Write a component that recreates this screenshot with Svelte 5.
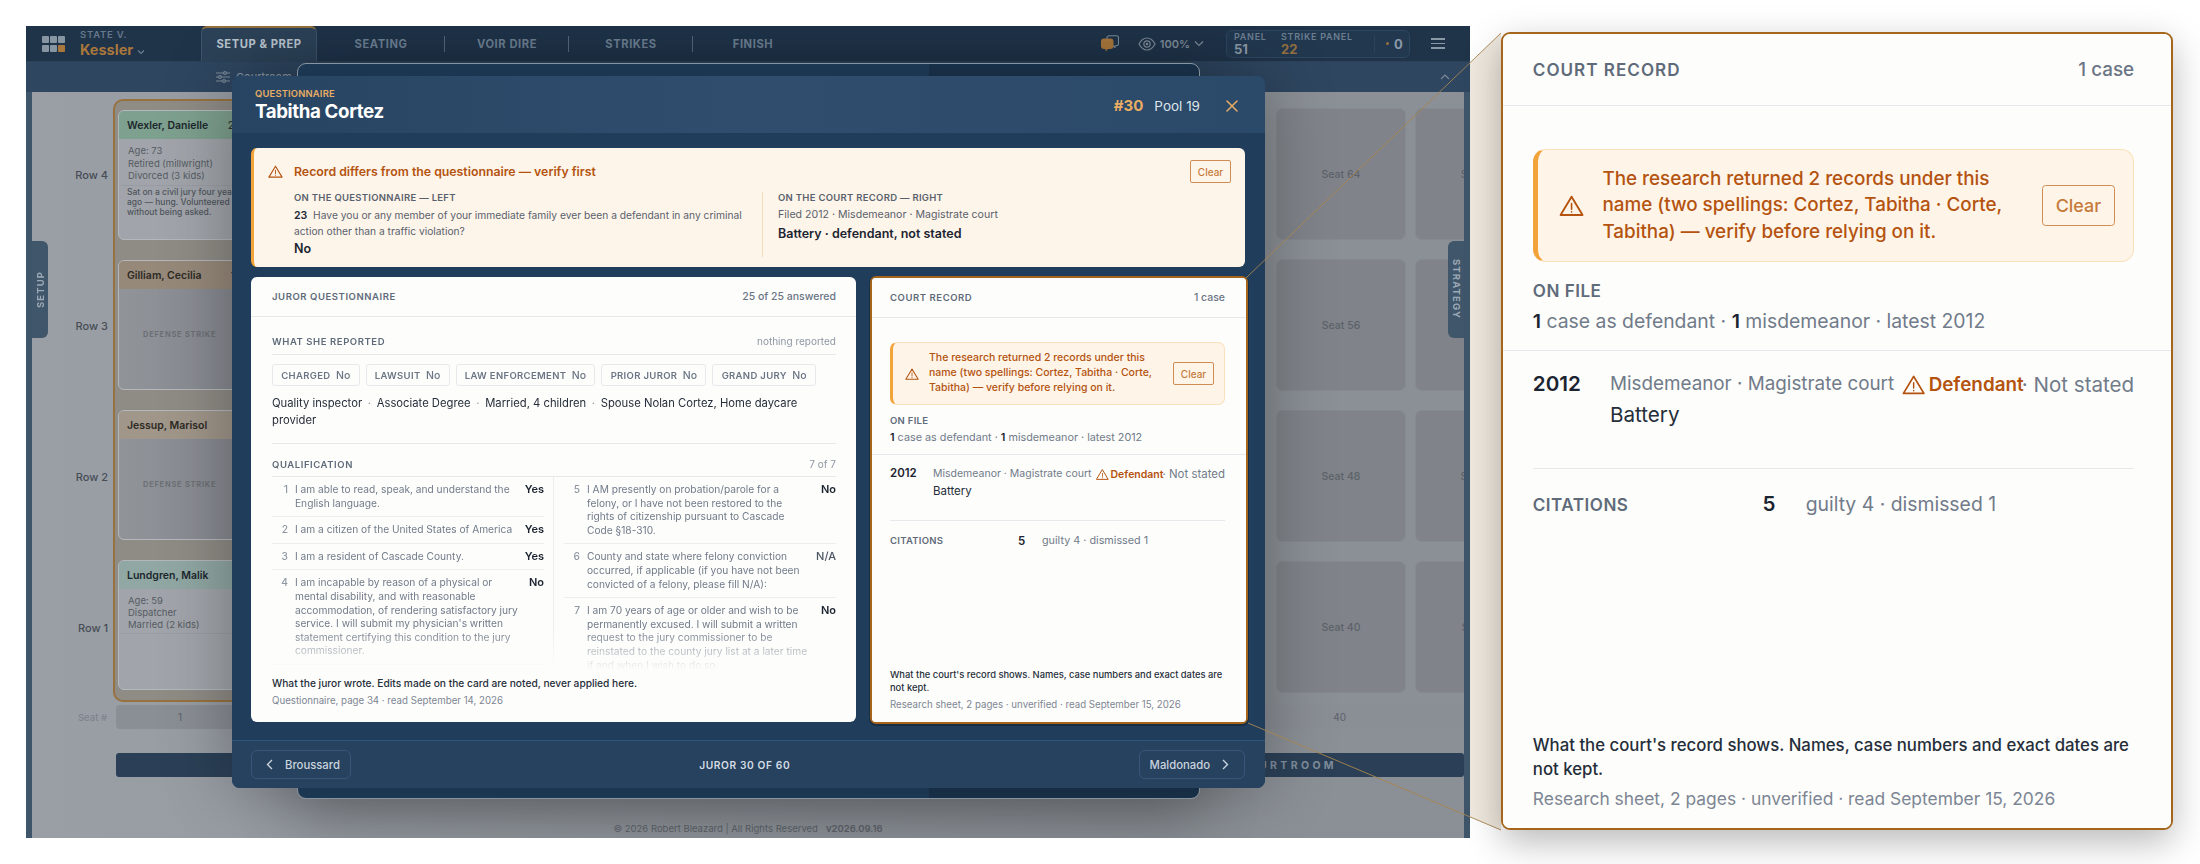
<script>
  const tabs = ['SEATING', 'VOIR DIRE', 'STRIKES', 'FINISH']

  const chips = [
    ['CHARGED', 'No'],
    ['LAWSUIT', 'No'],
    ['LAW ENFORCEMENT', 'No'],
    ['PRIOR JUROR', 'No'],
    ['GRAND JURY', 'No']
  ]

  const qualLeft = [
    { n: 1, text: 'I am able to read, speak, and understand the English language.', ans: 'Yes' },
    { n: 2, text: 'I am a citizen of the United States of America', ans: 'Yes' },
    { n: 3, text: 'I am a resident of Cascade County.', ans: 'Yes' },
    { n: 4, text: "I am incapable by reason of a physical or mental disability, and with reasonable accommodation, of rendering satisfactory jury service. I will submit my physician's written statement certifying this condition to the jury commissioner.", ans: 'No' }
  ]

  const qualRight = [
    { n: 5, text: 'I AM presently on probation/parole for a felony, or I have not been restored to the rights of citizenship pursuant to Cascade Code §18-310.', ans: 'No' },
    { n: 6, text: 'County and state where felony conviction occurred, if applicable (if you have not been convicted of a felony, please fill N/A):', ans: 'N/A', plain: true },
    { n: 7, text: 'I am 70 years of age or older and wish to be permanently excused. I will submit a written request to the jury commissioner to be reinstated to the county jury list at a later time if and when I wish to do so.', ans: 'No' }
  ]

  const rowLabels = ['Row 4', 'Row 3', 'Row 2', 'Row 1']
  const seatCols = [[64, 56, 48, 40], [65, 57, 49, 41]]
</script>

{#snippet warn(size)}
  <svg class="warn" width={size} height={size} viewBox="0 0 24 24" fill="none" stroke="currentColor" stroke-width="1.8" stroke-linejoin="round" stroke-linecap="round">
    <path d="M12 3.5 22.5 21h-21z" />
    <path d="M12 10v5.5M12 18v.2" stroke-width="1.5" />
  </svg>
{/snippet}

{#snippet courtRecord()}
  <div class="record">
    <div class="card-head rec-pad">
      <span class="card-title">COURT RECORD</span>
      <span class="card-count">1 case</span>
    </div>
    <div class="rec-alert">
      <span class="rec-alert-icon">{@render warn(14)}</span>
      <p>The research returned 2 records under this name (two spellings: Cortez, Tabitha · Corte, Tabitha) — verify before relying on it.</p>
      <button class="clear">Clear</button>
    </div>
    <div class="rec-pad onfile">
      <div class="rec-label">ON FILE</div>
      <div class="rec-summary"><b>1</b> case as defendant · <b>1</b> misdemeanor · latest 2012</div>
    </div>
    <div class="case">
      <div class="case-line">
        <b class="case-year">2012</b>
        <span class="case-kind">Misdemeanor · Magistrate court</span>
        <span class="case-role">{@render warn(13)}<b>Defendant</b><span class="role-note">· Not stated</span></span>
      </div>
      <div class="case-charge">Battery</div>
    </div>
    <div class="citations">
      <span class="rec-label">CITATIONS</span>
      <b>5</b>
      <span class="cit-note">guilty 4 · dismissed 1</span>
    </div>
    <div class="rec-foot rec-pad">
      <p class="foot-main">What the court's record shows. Names, case numbers and exact dates are not kept.</p>
      <p class="foot-note">Research sheet, 2 pages · unverified · read September 15, 2026</p>
    </div>
  </div>
{/snippet}

<div class="page">
  <div class="app">
    <header class="topbar">
      <div class="brand">
        <div class="grid-icon">
          <i></i><i></i><i></i><i></i><i></i><i class="on"></i>
        </div>
        <div class="case-name">
          <span class="state">STATE V.</span>
          <span class="kessler">Kessler
            <svg width="8" height="6" viewBox="0 0 8 6" fill="none" stroke="#6f8092" stroke-width="1.1"><path d="M1 1.5 4 4.5 7 1.5" /></svg>
          </span>
        </div>
      </div>
      <nav class="tabs">
        <span class="tab active">SETUP &amp; PREP</span>
        {#each tabs as t, i}
          <span class="tab" class:first={i === 0} class:last={i === tabs.length - 1}>{t}</span>
        {/each}
      </nav>
      <div class="top-right">
        <svg class="bubbles" width="18" height="17" viewBox="0 0 18 17">
          <path d="M8 .7h7.500a2 2 0 0 1 2 2v6a2 2 0 0 1-2 2H14v1.800L12 10.700" fill="none" stroke="#7e8c9a" stroke-width="1.100" stroke-linejoin="round" />
          <path d="M8 .7a2 2 0 0 0-2 2v2" fill="none" stroke="#7e8c9a" stroke-width="1.100" />
          <path d="M3 3.500h6.500a3 3 0 0 1 3 3v4.500a3 3 0 0 1-3 3H7L4.500 16.500V14H3a3 3 0 0 1-3-3V6.500a3 3 0 0 1 3-3z" fill="#a9773c" />
        </svg>
        <div class="zoom-ctl">
          <svg width="18" height="14" viewBox="0 0 18 14" fill="none" stroke="#7e8c9a" stroke-width="1.200">
            <path d="M1 7c2-3.800 5-6 8-6s6 2.200 8 6c-2 3.800-5 6-8 6s-6-2.200-8-6z" />
            <circle cx="9" cy="7" r="3.200" />
            <circle cx="9" cy="7" r="1.300" fill="#7e8c9a" stroke="none" />
          </svg>
          <span>100%</span>
          <svg width="10" height="7" viewBox="0 0 10 7" fill="none" stroke="#7e8c9a" stroke-width="1.100"><path d="M1 1.500 5 5.500 9 1.500" /></svg>
        </div>
        <div class="counts">
          <div class="count panel"><span>PANEL</span><b>51</b></div>
          <div class="count strike"><span>STRIKE PANEL</span><b>22</b></div>
          <div class="alt"><i></i><b>0</b></div>
        </div>
        <div class="burger"><i></i><i></i><i></i></div>
      </div>
    </header>

    <div class="subbar">
      <svg class="sliders" width="14" height="12" viewBox="0 0 14 12" fill="none" stroke="#7e8c9a" stroke-width="1.100">
        <path d="M0 2h14M0 6h14M0 10h14" />
        <circle cx="9" cy="2" r="1.400" fill="#2d4560" />
        <circle cx="4" cy="6" r="1.400" fill="#2d4560" />
        <circle cx="8" cy="10" r="1.400" fill="#2d4560" />
      </svg>
      <span class="sub-label">Courtroom</span>
      <svg class="sub-up" width="10" height="6" viewBox="0 0 10 6" fill="none" stroke="#7e8c9a" stroke-width="1.100"><path d="M1 5 5 1 9 5" /></svg>
    </div>

    <main class="board">
      <div class="rows">
        <div class="row-labels">
          {#each rowLabels as r}<div class="row-label">{r}</div>{/each}
        </div>
        <div class="pick-col">
          <div class="juror">
            <div class="juror-head green"><span>Wexler, Danielle</span><span class="juror-num">24</span></div>
            <div class="juror-facts">Age: 73<br />Retired (millwright)<br />Divorced (3 kids)</div>
            <div class="juror-note">Sat on a civil jury four years ago — hung. Volunteered it without being asked.</div>
          </div>
          <div class="juror struck">
            <div class="juror-head tan"><span>Gilliam, Cecilia</span><span class="juror-num">17</span></div>
            <div class="strike-mark">DEFENSE STRIKE</div>
          </div>
          <div class="juror struck">
            <div class="juror-head tan2"><span>Jessup, Marisol</span></div>
            <div class="strike-mark">DEFENSE STRIKE</div>
          </div>
          <div class="juror">
            <div class="juror-head teal"><span>Lundgren, Malik</span></div>
            <div class="juror-facts small">Age: 59<br />Dispatcher<br />Married (2 kids)</div>
          </div>
        </div>
        <div class="spacer"></div>
        {#each seatCols as col}
          <div class="seat-col">
            {#each col as s}<div class="seat">Seat {s}</div>{/each}
          </div>
        {/each}
      </div>
      <div class="seatno-row">
        <span class="seatno-label">Seat #</span>
        <div class="seatno-bar"><span class="n1">1</span><span class="n40">40</span></div>
      </div>
      <div class="court-bar">COURTROOM</div>
      <footer class="copyright">© 2026 Robert Bleazard | All Rights Reserved &nbsp; <b>v2026.09.16</b></footer>
    </main>

    <div class="side-tab setup">SETUP</div>
    <div class="side-tab strategy">STRATEGY</div>

    <div class="back-sheet"></div>

    <section class="modal">
      <div class="modal-head">
        <div>
          <div class="eyebrow">QUESTIONNAIRE</div>
          <h1>Tabitha Cortez</h1>
        </div>
        <div class="head-right">
          <b>#30</b>
          <span>Pool 19</span>
          <svg width="12" height="12" viewBox="0 0 12 12" fill="none" stroke="#e8ad63" stroke-width="1.500" stroke-linecap="round"><path d="M1 1l10 10M11 1 1 11" /></svg>
        </div>
      </div>

      <div class="modal-body">
        <div class="banner">
          <div class="banner-top">
            <span class="banner-icon">{@render warn(15)}</span>
            <strong>Record differs from the questionnaire — verify first</strong>
            <button class="clear">Clear</button>
          </div>
          <div class="banner-cols">
            <div class="banner-left">
              <div class="b-label">ON THE QUESTIONNAIRE — LEFT</div>
              <p class="b-text q"><b>23</b>&nbsp; Have you or any member of your immediate family ever been a defendant in any criminal action other than a traffic violation?</p>
              <div class="b-answer">No</div>
            </div>
            <div class="banner-right">
              <div class="b-label">ON THE COURT RECORD — RIGHT</div>
              <p class="b-text">Filed 2012 · Misdemeanor · Magistrate court</p>
              <div class="b-answer r">Battery · defendant, not stated</div>
            </div>
          </div>
        </div>

        <div class="cards">
          <article class="q-card">
            <div class="card-head q-pad">
              <span class="card-title">JUROR QUESTIONNAIRE</span>
              <span class="card-count">25 of 25 answered</span>
            </div>
            <div class="q-body q-pad">
              <div class="sec-head">
                <span class="sec-title">WHAT SHE REPORTED</span>
                <span class="sec-note">nothing reported</span>
              </div>
              <div class="chips">
                {#each chips as c}
                  <span class="chip">{c[0]}<em>{c[1]}</em></span>
                {/each}
              </div>
              <p class="bio">Quality inspector <i>·</i> Associate Degree <i>·</i> Married, 4 children <i>·</i> Spouse Nolan Cortez, Home daycare provider</p>
              <div class="sec-head qual">
                <span class="sec-title">QUALIFICATION</span>
                <span class="sec-note">7 of 7</span>
              </div>
              <div class="qual-grid">
                <div>
                  {#each qualLeft as q}
                    <div class="q-row">
                      <span class="q-n">{q.n}</span><span class="q-t">{q.text}</span><b class="q-a">{q.ans}</b>
                    </div>
                  {/each}
                </div>
                <div class="q-right">
                  {#each qualRight as q}
                    <div class="q-row">
                      <span class="q-n">{q.n}</span><span class="q-t">{q.text}</span><b class="q-a" class:plain={q.plain}>{q.ans}</b>
                    </div>
                  {/each}
                </div>
              </div>
            </div>
            <div class="q-foot q-pad">
              <p class="foot-main">What the juror wrote. Edits made on the card are noted, never applied here.</p>
              <p class="foot-note">Questionnaire, page 34 · read September 14, 2026</p>
            </div>
          </article>
          <article class="rec-card">{@render courtRecord()}</article>
        </div>
      </div>

      <div class="modal-foot">
        <button class="nav-btn prev">
          <svg width="7" height="11" viewBox="0 0 7 11" fill="none" stroke="#c9d3dd" stroke-width="1.400"><path d="M6 1 1.500 5.500 6 10" /></svg>
          Broussard
        </button>
        <span class="juror-pos">JUROR 30 OF 60</span>
        <button class="nav-btn next">
          Maldonado
          <svg width="7" height="11" viewBox="0 0 7 11" fill="none" stroke="#c9d3dd" stroke-width="1.400"><path d="M1 1l4.500 4.500L1 10" /></svg>
        </button>
      </div>
    </section>
  </div>

  <svg class="connector" width="2200" height="864" viewBox="0 0 2200 864">
    <path class="out" d="M1470 63 1501 33V830L1470 817z" />
    <path class="ray" d="M1246 278 1501 33M1248 723 1501 830" />
  </svg>

  <aside class="loupe">
    <div class="loupe-inner">{@render courtRecord()}</div>
  </aside>
</div>

<style>
  :global(body) {
    margin: 0;
    background: #fff;
  }

  .page {
    position: relative;
    width: 2200px;
    height: 864px;
    overflow: hidden;
    font-family: Inter, 'Liberation Sans', sans-serif;
    padding: 26px 0 0 26px;
    box-sizing: border-box;
  }

  p, h1 {
    margin: 0;
  }

  button {
    font-family: inherit;
    cursor: pointer;
  }

  .app {
    position: relative;
    width: 1444px;
    height: 812px;
    background: #3f5569;
    display: flex;
    flex-direction: column;
    overflow: hidden;
  }

  /* top bar */
  .topbar {
    height: 36px;
    background: #1f3349;
    border-bottom: 1px solid #2c4258;
    box-sizing: border-box;
    display: flex;
    align-items: stretch;
    flex: none;
  }

  .brand {
    width: 175px;
    display: flex;
    align-items: center;
    padding-left: 16px;
    box-sizing: border-box;
  }

  .grid-icon {
    width: 23px;
    display: grid;
    grid-template-columns: repeat(3, 7px);
    gap: 2px 1px;
  }

  .grid-icon i {
    height: 7px;
    background: #8895a2;
    border-radius: 1px;
  }

  .grid-icon i.on {
    background: #a9773c;
  }

  .case-name {
    margin-left: 15px;
    display: flex;
    flex-direction: column;
    margin-top: -1px;
  }

  .state {
    font-size: 9.500px;
    line-height: 12px;
    font-weight: 600;
    letter-spacing: 0.08em;
    color: #66798c;
  }

  .kessler {
    font-size: 14.500px;
    line-height: 17px;
    font-weight: 700;
    color: #a9773c;
  }

  .tabs {
    display: flex;
    align-items: stretch;
  }

  .tab {
    width: 124px;
    display: flex;
    align-items: center;
    justify-content: center;
    font-size: 11.200px;
    font-weight: 700;
    letter-spacing: 0.05em;
    color: #6c7f92;
    position: relative;
  }

  .tab.first {
    width: 128px;
  }

  .tab.last {
    margin-left: -2px;
  }

  .tab:not(.active):not(.last)::after {
    content: '';
    position: absolute;
    right: 0;
    top: 10px;
    height: 16px;
    width: 1px;
    background: #54687c;
  }

  .tab.active {
    width: 116px;
    background: #2c4258;
    color: #b9c3cd;
    border: 1px solid #3e5469;
    border-top: 2px solid #94703f;
    border-bottom: none;
    border-radius: 6px 6px 0 0;
    box-sizing: border-box;
    padding-bottom: 2px;
  }

  .top-right {
    margin-left: auto;
    display: flex;
    align-items: center;
    padding-right: 25px;
  }

  .bubbles {
    margin-right: 19px;
  }

  .zoom-ctl {
    display: flex;
    align-items: center;
    gap: 4px;
    font-size: 11px;
    font-weight: 600;
    color: #7e8c9a;
    margin-right: 22px;
  }

  .counts {
    width: 184px;
    height: 28px;
    box-sizing: border-box;
    border: 1px solid #2f4660;
    border-radius: 6px;
    background: #22384f;
    display: flex;
    align-items: center;
    padding-left: 7px;
  }

  .count {
    display: flex;
    flex-direction: column;
  }

  .count.panel {
    width: 47px;
  }

  .count.strike {
    width: 93px;
  }

  .count span {
    font-size: 9px;
    line-height: 11px;
    font-weight: 600;
    letter-spacing: 0.08em;
    color: #6c7f92;
  }

  .count b {
    font-size: 13px;
    line-height: 14px;
    font-weight: 700;
    color: #8a99a8;
  }

  .count.strike b {
    color: #94703f;
  }

  .alt {
    height: 18px;
    border-left: 1px solid #2d4359;
    padding-left: 11px;
    display: flex;
    align-items: center;
    gap: 5px;
  }

  .alt i {
    width: 3px;
    height: 3px;
    border-radius: 50%;
    background: #94703f;
  }

  .alt b {
    font-size: 13px;
    color: #8a99a8;
  }

  .burger {
    margin-left: 21px;
    width: 14px;
    display: flex;
    flex-direction: column;
    gap: 3px;
  }

  .burger i {
    height: 1.500px;
    background: #8a99a8;
  }

  /* sub bar */
  .subbar {
    height: 30px;
    background: #2e4660;
    display: flex;
    align-items: center;
    padding-left: 190px;
    padding-right: 20px;
    flex: none;
  }

  .sub-label {
    margin-left: 6px;
    font-size: 11px;
    color: #8a99a8;
  }

  .sub-up {
    margin-left: auto;
  }

  /* seating board behind the scrim */
  .board {
    flex: 1;
    margin: 0 6px;
    background: linear-gradient(90deg, #9a9fa6, #8b9096 85%);
    overflow: hidden;
    display: flex;
    flex-direction: column;
    min-height: 0;
  }

  .rows {
    display: flex;
    align-items: flex-start;
    margin-top: 7px;
    height: 603px;
  }

  .row-labels {
    width: 76px;
    flex: none;
    display: flex;
    flex-direction: column;
  }

  .row-label {
    height: 151px;
    display: flex;
    align-items: center;
    justify-content: flex-end;
    font-size: 11px;
    font-weight: 500;
    color: #474d55;
  }

  .pick-col {
    margin-left: 5px;
    width: 150px;
    flex: none;
    height: 603px;
    box-sizing: border-box;
    border: 2px solid #97723f;
    border-radius: 10px;
    padding: 9px 3px;
    background: #8f8c86;
    display: flex;
    flex-direction: column;
    gap: 20px;
  }

  .juror {
    height: 130px;
    flex: none;
    background: #a1a5ab;
    border: 1px solid #b4b8bd;
    border-radius: 6px;
    overflow: hidden;
    box-sizing: border-box;
  }

  .juror-head {
    height: 28px;
    display: flex;
    align-items: center;
    padding: 1px 0 0 8px;
    box-sizing: border-box;
    font-size: 10.500px;
    font-weight: 600;
    color: #1c272d;
  }

  .juror-num {
    margin-left: auto;
    margin-right: 16px;
    font-weight: 500;
    color: #333;
  }

  .green { background: #7ea08e; }
  .tan { background: #96897a; color: #2d2a24; }
  .tan2 { background: #a0968a; color: #2d2a24; }
  .teal { background: #90a7a3; }

  .juror-facts {
    padding: 6px 9px 2px;
    font-size: 9.500px;
    line-height: 12.500px;
    color: #565b62;
    border-bottom: 1px solid #999da3;
  }

  .juror-facts.small {
    line-height: 12px;
  }

  .juror-note {
    padding: 1px 8px;
    font-size: 8.500px;
    line-height: 10px;
    font-weight: 500;
    color: #4f545b;
  }

  .juror.struck {
    background: linear-gradient(90deg, #909499, #84878e);
  }

  .strike-mark {
    margin-top: 41px;
    margin-left: 24px;
    font-size: 7.500px;
    font-weight: 700;
    letter-spacing: 0.1em;
    color: #6c7076;
  }

  .spacer {
    flex: 1;
  }

  .seat-col {
    width: 130px;
    flex: none;
    margin-left: 9px;
    margin-top: 9px;
    display: flex;
    flex-direction: column;
    gap: 19px;
  }

  .seat-col:last-child {
    margin-right: -81px;
  }

  .seat {
    height: 132px;
    box-sizing: border-box;
    background: #80848a;
    border: 1px solid #858990;
    border-radius: 7px;
    display: flex;
    align-items: center;
    justify-content: center;
    font-size: 10.500px;
    font-weight: 500;
    color: #5d6269;
  }

  .seatno-row {
    display: flex;
    align-items: center;
    margin-top: 3px;
    height: 24px;
  }

  .seatno-label {
    width: 75px;
    text-align: right;
    font-size: 9.500px;
    font-weight: 500;
    color: #7e838a;
    flex: none;
  }

  .seatno-bar {
    margin-left: 9px;
    flex: 1;
    height: 24px;
    background: #8a8e95;
    border-radius: 4px;
    position: relative;
    font-size: 10px;
    color: #5d6269;
    display: flex;
    align-items: center;
    justify-content: space-between;
    padding: 0 118px 0 62px;
  }

  .court-bar {
    margin: 24px 0 0 84px;
    height: 24px;
    flex: none;
    background: #2b4057;
    border-radius: 3px;
    display: flex;
    align-items: center;
    justify-content: flex-end;
    padding-right: 127px;
    font-size: 10.500px;
    font-weight: 700;
    letter-spacing: 0.32em;
    color: #7f8d9c;
  }

  .copyright {
    margin-top: 46px;
    text-align: center;
    font-size: 9.500px;
    line-height: 12px;
    color: #60666d;
  }

  .copyright b {
    font-weight: 600;
  }

  .side-tab {
    position: absolute;
    top: 215px;
    width: 16px;
    height: 97px;
    box-sizing: border-box;
    background: #3f566b;
    color: #9daab6;
    font-size: 9.500px;
    font-weight: 700;
    letter-spacing: 0.12em;
    writing-mode: vertical-rl;
    display: flex;
    align-items: center;
    justify-content: center;
  }

  .side-tab.setup {
    left: 6px;
    transform: rotate(180deg);
    border-radius: 6px 0 0 6px;
  }

  .side-tab.strategy {
    right: 6px;
    border-radius: 6px 0 0 6px;
  }

  .back-sheet {
    position: absolute;
    left: 271px;
    top: 37px;
    width: 903px;
    height: 736px;
    box-sizing: border-box;
    border: 1px solid #9aa8b5;
    border-radius: 9px;
    background: linear-gradient(90deg, #20405f 70%, #1b3651 70%);
    box-shadow: 0 20px 60px rgba(0, 0, 0, 0.25);
  }

  /* modal */
  .modal {
    position: absolute;
    left: 206px;
    top: 50px;
    width: 1033px;
    height: 712px;
    border-radius: 8px;
    background: #203e5c;
    box-shadow: 0 0 70px rgba(0, 0, 0, 0.32);
    display: flex;
    flex-direction: column;
    overflow: hidden;
  }

  .modal-head {
    height: 57px;
    flex: none;
    box-sizing: border-box;
    padding: 11px 27px 0 23px;
    background: linear-gradient(90deg, #274562, #304d6e 50%, #2b4969);
    display: flex;
    justify-content: space-between;
  }

  .eyebrow {
    font-size: 9.400px;
    line-height: 13px;
    font-weight: 600;
    letter-spacing: 0.02em;
    color: #e8ad63;
  }

  h1 {
    font-size: 18.700px;
    line-height: 24px;
    font-weight: 700;
    letter-spacing: -0.02em;
    color: #fff;
  }

  .head-right {
    display: flex;
    align-items: center;
    height: 35px;
    margin-top: 1px;
    font-size: 13.500px;
    color: #dde4ea;
  }

  .head-right b {
    font-size: 15px;
    font-weight: 700;
    color: #e8ad63;
    margin-right: 11px;
  }

  .head-right svg {
    margin-left: 26px;
  }

  .modal-body {
    flex: 1;
    padding: 15px 20px 0 19px;
    min-height: 0;
  }

  .banner {
    height: 119px;
    box-sizing: border-box;
    background: #fef5ea;
    border-left: 3px solid #f2a33a;
    border-radius: 6px;
    padding: 12px 14px 0 14px;
  }

  .banner-top {
    display: flex;
    align-items: center;
    height: 23px;
  }

  .banner-icon {
    color: #b4530f;
    display: flex;
    width: 26px;
  }

  .banner-top strong {
    font-size: 12.300px;
    font-weight: 600;
    color: #b4530f;
  }

  .clear {
    margin-left: auto;
    width: 41px;
    height: 23px;
    padding: 0;
    flex: none;
    background: transparent;
    border: 1px solid #cf8d55;
    border-radius: 2px;
    color: #c67b3b;
    font-size: 10px;
    font-weight: 500;
  }

  .banner-cols {
    margin: 9px 0 0 26px;
    display: flex;
  }

  .banner-left {
    width: 469px;
    box-sizing: border-box;
    padding-right: 10px;
    border-right: 1px solid #f3dcbc;
  }

  .banner-right {
    padding-left: 15px;
    height: 64px;
  }

  .b-label {
    font-size: 9.500px;
    line-height: 12px;
    font-weight: 600;
    letter-spacing: 0.03em;
    color: #59616c;
  }

  .b-text {
    margin-top: 4px;
    font-size: 10.600px;
    line-height: 14.700px;
    color: #59616c;
  }

  .b-text.q {
    font-size: 10.250px;
  }

  .b-text b {
    font-size: 10.600px;
    font-weight: 600;
    color: #1f2937;
  }

  .b-answer {
    margin-top: 3px;
    font-size: 12.500px;
    line-height: 16px;
    font-weight: 600;
    color: #1b2430;
  }

  .b-answer.r {
    margin-top: 3px;
  }

  .cards {
    margin-top: 10px;
    display: grid;
    grid-template-columns: 605px 378px;
    gap: 14px;
    height: 445px;
  }

  .q-card {
    background: #fdfdfb;
    border-radius: 6px;
    display: flex;
    flex-direction: column;
    overflow: hidden;
    min-height: 0;
  }

  .card-head {
    height: 40px;
    flex: none;
    box-sizing: border-box;
    display: flex;
    align-items: center;
    justify-content: space-between;
    border-bottom: 1px solid #e6e8eb;
  }

  .q-pad {
    padding-left: 21px;
    padding-right: 20px;
  }

  .card-title {
    font-size: 9.500px;
    font-weight: 600;
    letter-spacing: 0.06em;
    color: #5f6b7a;
  }

  .card-count {
    font-size: 10.500px;
    font-weight: 500;
    color: #6b7585;
  }

  .q-body {
    flex: 1;
    min-height: 0;
    overflow: hidden;
    padding-top: 17px;
    -webkit-mask-image: linear-gradient(#000 calc(100% - 42px), transparent calc(100% - 2px));
    mask-image: linear-gradient(#000 calc(100% - 42px), transparent calc(100% - 2px));
  }

  .sec-head {
    display: flex;
    justify-content: space-between;
    align-items: center;
    height: 14px;
    padding-bottom: 6px;
    border-bottom: 1px solid #e6e8eb;
  }

  .sec-title {
    font-size: 9.500px;
    font-weight: 600;
    letter-spacing: 0.06em;
    color: #5f6b7a;
  }

  .sec-note {
    font-size: 10px;
    color: #8f97a3;
  }

  .chips {
    display: flex;
    gap: 6px;
    margin-top: 9px;
  }

  .chip {
    height: 22px;
    box-sizing: border-box;
    padding: 0 8.250px;
    display: inline-flex;
    align-items: center;
    border: 1px solid #e6e8eb;
    border-radius: 3px;
    font-size: 9.500px;
    font-weight: 600;
    letter-spacing: 0.035em;
    color: #6b7585;
  }

  .chip em {
    font-style: normal;
    font-weight: 500;
    letter-spacing: 0;
    font-size: 10.500px;
    margin-left: 5.500px;
  }

  .bio {
    margin-top: 9px;
    font-size: 11.250px;
    line-height: 17px;
    color: #252e3a;
    padding-bottom: 14px;
    border-bottom: 1px solid #e6e8eb;
  }

  .bio i {
    font-style: normal;
    color: #8f97a3;
    margin: 0 2.500px;
  }

  .sec-head.qual {
    margin-top: 13px;
    padding-bottom: 5px;
  }

  .qual-grid {
    display: grid;
    grid-template-columns: 272px 1fr;
  }

  .q-right {
    margin-left: 9px;
    padding-left: 10px;
    border-left: 1px solid #eceef0;
  }

  .q-right .q-t {
    margin-right: 4px;
  }

  .q-row {
    display: grid;
    grid-template-columns: 16px 1fr 20px;
    padding: 6px 0;
    border-bottom: 1px solid #eceef0;
    font-size: 10.200px;
    line-height: 13.600px;
  }

  .q-n {
    text-align: right;
    font-weight: 500;
    color: #8f97a3;
  }

  .q-t {
    margin-left: 7px;
    color: #717b8a;
  }

  .q-a {
    text-align: right;
    font-size: 11px;
    font-weight: 600;
    color: #1b2430;
    white-space: nowrap;
    justify-self: end;
  }

  .q-a.plain {
    font-weight: 500;
    color: #4b5563;
  }

  .q-foot {
    flex: none;
    height: 50px;
    box-sizing: border-box;
    padding-top: 5px;
  }

  .foot-main {
    font-size: 10.200px;
    line-height: 13.500px;
    font-weight: 450;
    color: #252e3a;
  }

  .rec-foot .foot-main {
    font-size: 9.350px;
  }

  .foot-note {
    margin-top: 3px;
    font-size: 9.700px;
    line-height: 13.500px;
    color: #7d8694;
  }

  /* court record card, rendered twice: in place and magnified */
  .rec-card {
    margin: -1px 0 -2px;
    border: 2px solid #a5651a;
    border-radius: 6px;
    background: #fdfdfb;
    overflow: hidden;
    box-shadow: 0 1px 0 1px rgba(0, 0, 0, 0.25);
  }

  .record {
    width: 374px;
    height: 444px;
    display: flex;
    flex-direction: column;
    background: #fdfdfb;
  }

  .rec-pad {
    padding-left: 18px;
    padding-right: 21px;
  }

  .record .card-head {
    height: 40px;
  }

  .rec-alert {
    margin: 24px 21px 0 18px;
    height: 63px;
    flex: none;
    box-sizing: border-box;
    display: flex;
    align-items: center;
    background: #fef4e8;
    border: 1px solid #fbe1bb;
    border-left: 3px solid #f2a33a;
    border-radius: 7px;
    padding: 0 10px 0 12px;
  }

  .rec-alert-icon {
    display: flex;
    color: #b4530f;
    width: 24px;
    flex: none;
  }

  .rec-alert p {
    font-size: 10.500px;
    line-height: 14.800px;
    font-weight: 500;
    color: #b4530f;
    width: 228px;
    flex: none;
  }

  .onfile {
    margin-top: 9px;
    padding-bottom: 8px;
    border-bottom: 1px solid #e6e8eb;
  }

  .rec-label {
    font-size: 9.500px;
    line-height: 14px;
    font-weight: 600;
    letter-spacing: 0.03em;
    color: #5f6b7a;
  }

  .rec-summary {
    margin-top: 2px;
    font-size: 10.800px;
    line-height: 16px;
    color: #717b8a;
  }

  .rec-summary b {
    font-weight: 600;
    color: #1b2430;
  }

  .case {
    margin: 0 21px 0 18px;
    padding: 10px 0 21px;
    border-bottom: 1px solid #e6e8eb;
  }

  .case-line {
    display: flex;
    align-items: center;
    height: 16px;
    font-size: 10.500px;
    color: #717b8a;
    white-space: nowrap;
  }

  .case-year {
    width: 43px;
    flex: none;
    font-size: 11.500px;
    font-weight: 600;
    color: #1b2430;
  }

  .case-role {
    margin-left: auto;
    margin-top: 2px;
    display: inline-flex;
    align-items: center;
  }

  .case-role b {
    font-size: 10.500px;
    font-weight: 600;
    color: #b4530f;
    margin-left: 2px;
  }

  .role-note {
    margin-left: -1px;
    font-size: 11.450px;
  }

  .case-role .warn {
    color: #b4530f;
  }

  .case-charge {
    margin: 2px 0 0 43px;
    font-size: 11.500px;
    line-height: 16px;
    color: #252e3a;
  }

  .citations {
    margin: 12px 21px 0 18px;
    display: grid;
    grid-template-columns: 128px 24px 1fr;
    align-items: center;
    line-height: 16px;
  }

  .citations b {
    font-size: 11.500px;
    font-weight: 600;
    color: #1b2430;
  }

  .cit-note {
    font-size: 10.800px;
    color: #717b8a;
  }

  .rec-foot {
    margin-top: auto;
    padding-bottom: 11px;
  }

  /* footer of the modal */
  .modal-foot {
    height: 48px;
    flex: none;
    box-sizing: border-box;
    border-top: 1px solid #33547a;
    background: #27425f;
    display: flex;
    align-items: center;
    justify-content: space-between;
    padding: 0 20px 0 19px;
  }

  .nav-btn {
    height: 29px;
    box-sizing: border-box;
    display: flex;
    align-items: center;
    gap: 12px;
    background: transparent;
    border: 1px solid #37567a;
    border-radius: 6px;
    color: #c9d3dd;
    font-size: 11.300px;
    font-weight: 500;
  }

  .nav-btn.prev {
    padding: 0 10px 0 14px;
  }

  .nav-btn.next {
    padding: 0 15px 0 10px;
  }

  .juror-pos {
    font-size: 10.200px;
    font-weight: 600;
    letter-spacing: 0.06em;
    color: #d4dbe3;
  }

  /* magnifier */
  .connector {
    position: absolute;
    left: 0;
    top: 0;
    pointer-events: none;
  }

  .connector .out {
    fill: #efe8de;
  }

  .connector .ray {
    fill: none;
    stroke: #a8854f;
    stroke-width: 1;
    opacity: 0.9;
  }

  .loupe {
    position: absolute;
    left: 1501px;
    top: 32px;
    width: 672px;
    height: 798px;
    box-sizing: border-box;
    border: 2px solid #a5651a;
    border-radius: 9px;
    background: #fdfdfb;
    overflow: hidden;
    box-shadow: 0 12px 36px rgba(0, 0, 0, 0.28);
  }

  .loupe-inner {
    zoom: 1.795;
    margin-left: -1.400px;
  }
</style>
